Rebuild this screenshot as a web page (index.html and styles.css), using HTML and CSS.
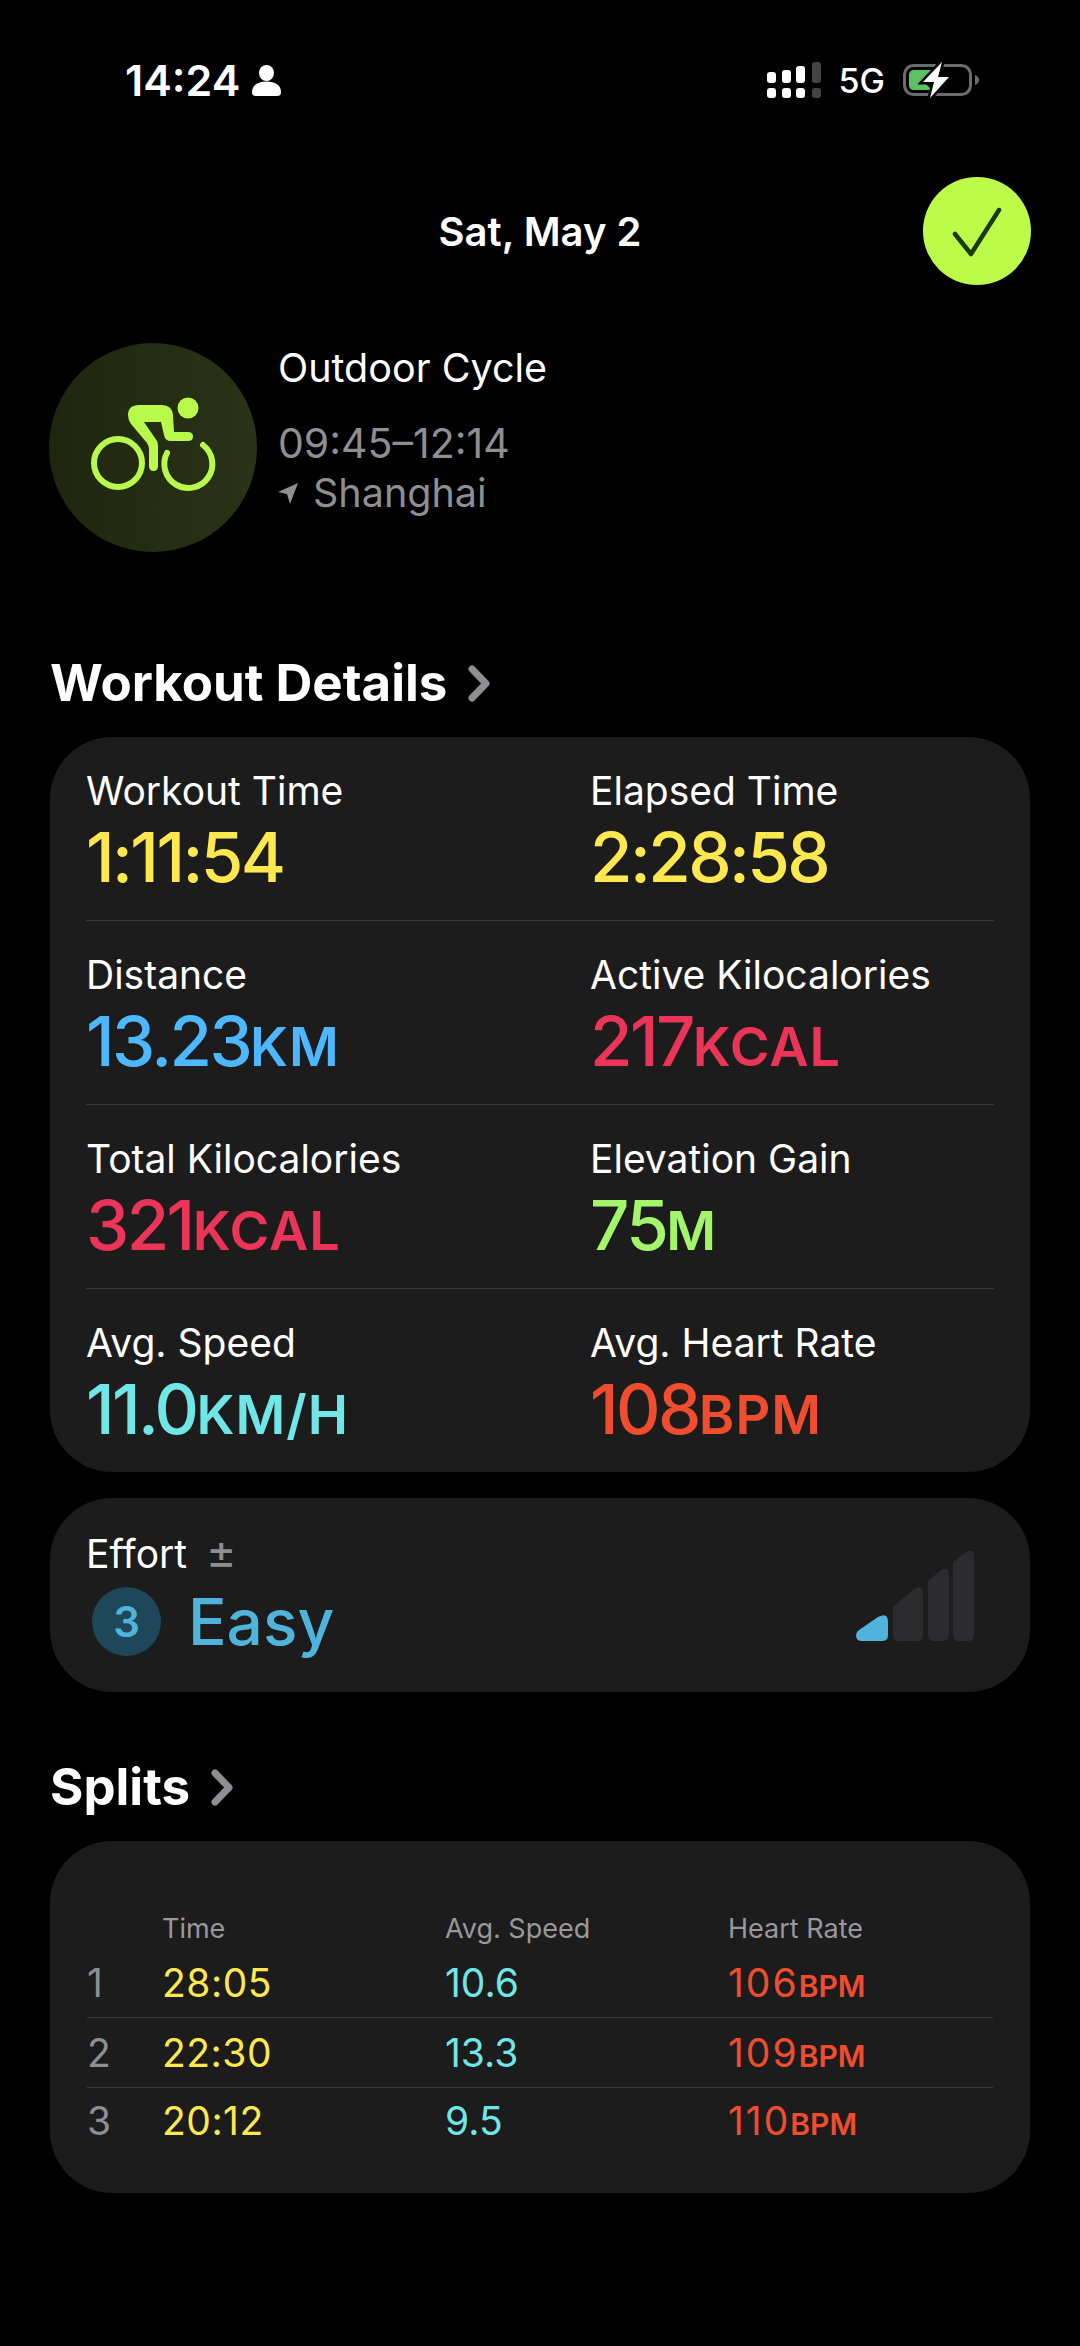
FILE: index.html
```html
<!DOCTYPE html>
<html>
<head>
  <meta charset="UTF-8">
  <title>Outdoor Cycle</title>
  <link rel="stylesheet" href="styles.css">
</head>
<body>
  <div class="status-bar">
    <div class="status-left">
      <span class="clock">14:24</span>
      <svg class="person" width="29" height="31" viewBox="0 0 29 31"><ellipse cx="14.500" cy="8" rx="7.500" ry="8"/><path d="M0 27C0 20 6 16.500 14.500 16.500S29 20 29 27C29 30 27.500 31 25 31H4C1.500 31 0 30 0 27Z"/></svg>
    </div>
    <div class="status-right">
      <svg class="signal" width="54" height="36" viewBox="0 0 54 36">
        <rect x="0" y="10" width="9" height="11" rx="3" fill="#fff"/>
        <rect x="15" y="8" width="9" height="13" rx="3" fill="#fff"/>
        <rect x="29" y="4" width="9" height="17" rx="3" fill="#fff"/>
        <rect x="45" y="0" width="9" height="21" rx="3" fill="#444"/>
        <rect x="0" y="26" width="9" height="10" rx="3" fill="#fff"/>
        <rect x="15" y="26" width="9" height="10" rx="3" fill="#fff"/>
        <rect x="29" y="26" width="9" height="10" rx="3" fill="#fff"/>
        <rect x="45" y="26" width="9" height="10" rx="3" fill="#444"/>
      </svg>
      <span class="network">5G</span>
      <svg class="battery" width="76" height="38" viewBox="0 0 76 38">
        <rect x="1.500" y="4.500" width="66" height="29" rx="9" fill="none" stroke="#6c6c6c" stroke-width="3"/>
        <path d="M72 14C75 15 76 17 76 19S75 23 72 24Z" fill="#6c6c6c"/>
        <path d="M11 9H32L22 22L29 29H11C8 29 6 27 6 24V14C6 11 8 9 11 9Z" fill="#5cc163"/>
        <path d="M39 1L20 21H31L27 37L46 16H35Z" fill="#000" stroke="#000" stroke-width="5"/>
        <path d="M39 1L20 21H31L27 37L46 16H35Z" fill="#fff"/>
      </svg>
    </div>
  </div>

  <div class="top-row">
    <span></span>
    <h1 class="date">Sat, May 2</h1>
    <div class="done">
      <svg width="108" height="108" viewBox="0 0 108 108"><path d="M32 57L48 77L76 33" fill="none" stroke="#1a3a10" stroke-width="4.500" stroke-linecap="round" stroke-linejoin="round"/></svg>
    </div>
  </div>

  <div class="activity">
    <div class="activity-icon">
      <svg width="208" height="209" viewBox="0 0 208 209">
        <circle cx="69" cy="120" r="24" fill="none" stroke="#b9f94c" stroke-width="6"/>
        <path d="M118 110A24 24 0 1 0 154 102" fill="none" stroke="#b9f94c" stroke-width="6" stroke-linecap="round"/>
        <circle cx="139" cy="65" r="10.500" fill="#b9f94c"/>
        <path d="M90 62H113Q123 62 124 72L125 89H139Q144 89 144 93.500Q144 98 139 98H122Q116 98 115 92L112 79H95L108 98Q109 100 109 103V123Q109 128 104.500 128Q100 128 100 123V106Q100 103 98 100L82 81Q79 77 79 72Q79 62 90 62Z" fill="#b9f94c"/>
      </svg>
    </div>
    <div class="activity-info">
      <div class="activity-name">Outdoor Cycle</div>
      <div class="activity-time">09:45–12:14</div>
      <div class="activity-place">
        <svg width="20" height="21" viewBox="0 0 20 21"><path d="M20 0L12 21L9 11L0 9Z" fill="#8e8e93"/></svg>
        <span>Shanghai</span>
      </div>
    </div>
  </div>

  <h2 class="section-title section-first">Workout Details
    <svg width="22" height="37" viewBox="0 0 22 37"><path d="M4 4L18 18.500L4 33" fill="none" stroke="#8e8e93" stroke-width="7" stroke-linecap="round" stroke-linejoin="round"/></svg>
  </h2>

  <div class="card details">
    <div class="metric-row">
      <div>
        <div class="label">Workout Time</div>
        <div class="value yellow">1:11:54</div>
      </div>
      <div>
        <div class="label">Elapsed Time</div>
        <div class="value yellow">2:28:58</div>
      </div>
    </div>
    <div class="metric-row">
      <div>
        <div class="label">Distance</div>
        <div class="value blue">13.23<span class="unit">KM</span></div>
      </div>
      <div>
        <div class="label">Active Kilocalories</div>
        <div class="value pink">217<span class="unit">KCAL</span></div>
      </div>
    </div>
    <div class="metric-row">
      <div>
        <div class="label">Total Kilocalories</div>
        <div class="value pink">321<span class="unit">KCAL</span></div>
      </div>
      <div>
        <div class="label">Elevation Gain</div>
        <div class="value green">75<span class="unit">M</span></div>
      </div>
    </div>
    <div class="metric-row">
      <div>
        <div class="label">Avg. Speed</div>
        <div class="value cyan">11.0<span class="unit">KM/H</span></div>
      </div>
      <div>
        <div class="label">Avg. Heart Rate</div>
        <div class="value orange">108<span class="unit">BPM</span></div>
      </div>
    </div>
  </div>

  <div class="card effort">
    <div>
      <div class="label">Effort <span class="plus-minus">±</span></div>
      <div class="effort-level">
        <span class="effort-badge">3</span>
        <span class="effort-name">Easy</span>
      </div>
    </div>
    <svg class="effort-bars" width="118" height="90" viewBox="0 0 118 90">
      <path d="M0 84Q0 81 3 79L22 66Q32 61 32 71V84Q32 90 26 90H6Q0 90 0 84Z" fill="#4fb3dc"/>
      <path d="M37 56L58 38Q67 33 67 42V84Q67 90 61 90H43Q37 90 37 84Z" fill="#2c2c2e"/>
      <path d="M72 30L85 19Q93 15 93 23V84Q93 90 87 90H78Q72 90 72 84Z" fill="#2c2c2e"/>
      <path d="M97 11L110 1Q118 -3 118 6V84Q118 90 112 90H103Q97 90 97 84Z" fill="#2c2c2e"/>
    </svg>
  </div>

  <h2 class="section-title section-splits">Splits
    <svg width="22" height="37" viewBox="0 0 22 37"><path d="M4 4L18 18.500L4 33" fill="none" stroke="#8e8e93" stroke-width="7" stroke-linecap="round" stroke-linejoin="round"/></svg>
  </h2>

  <div class="card splits">
    <div class="split-head">
      <span></span>
      <span>Time</span>
      <span>Avg. Speed</span>
      <span>Heart Rate</span>
    </div>
    <div class="split-row">
      <span class="split-num">1</span>
      <span class="yellow">28:05</span>
      <span class="cyan">10.6</span>
      <span class="orange">106<span class="split-unit">BPM</span></span>
    </div>
    <div class="split-row">
      <span class="split-num">2</span>
      <span class="yellow">22:30</span>
      <span class="cyan">13.3</span>
      <span class="orange">109<span class="split-unit">BPM</span></span>
    </div>
    <div class="split-row">
      <span class="split-num">3</span>
      <span class="yellow">20:12</span>
      <span class="cyan">9.5</span>
      <span class="orange">110<span class="split-unit">BPM</span></span>
    </div>
  </div>
</body>
</html>
```

FILE: styles.css
```css
:root {
  --card-color: #1c1c1c;
  --line-color: #383838;
  --gray-text: #8e8e93;
  --lime: #bdfb4a;
}

body {
  margin: 0;
  background-color: #000;
  color: #fff;
  font-family: Inter, "Noto Sans", sans-serif;
}

h1, h2 {
  margin: 0;
}

/* 状态栏 */
.status-bar {
  display: flex;
  align-items: center;
  justify-content: space-between;
  height: 80px;
  padding: 40px 101px 0 125px;
}
.status-left {
  display: flex;
  align-items: center;
  gap: 12px;
}
.clock {
  font-size: 43px;
  font-weight: 600;
}
.person {
  fill: #fff;
}
.status-right {
  display: flex;
  align-items: center;
  gap: 12px;
}
.network {
  font-size: 34px;
  font-weight: 500;
  margin-left: 6px;
  margin-right: 6px;
}

.top-row {
  display: grid;
  grid-template-columns: 1fr auto 1fr;
  align-items: center;
  height: 108px;
  margin-top: 57px;
  padding: 0 49px;
}
.date {
  font-size: 40px;
  font-weight: 600;
}
.done {
  justify-self: end;
  width: 108px;
  height: 108px;
  border-radius: 50%;
  background-color: var(--lime);
}

.activity {
  display: flex;
  gap: 21px;
  margin-top: 58px;
  padding-left: 49px;
}
.activity-icon {
  width: 208px;
  height: 209px;
  border-radius: 50%;
  background: linear-gradient(90deg, #1f2610, #2a3316);
}
.activity-info {
  font-size: 39.500px;
  line-height: 50px;
}
.activity-time {
  margin-top: 25px;
  color: var(--gray-text);
  font-size: 41px;
}
.activity-place {
  display: flex;
  align-items: center;
  gap: 15px;
  color: var(--gray-text);
}

.section-title {
  display: flex;
  align-items: center;
  gap: 21px;
  margin-left: 50px;
  font-size: 51px;
  font-weight: 700;
  line-height: 60px;
}
.section-first {
  margin-top: 101px;
}
.section-splits {
  margin-top: 65px;
}

.card {
  margin: 0 50px;
  background-color: var(--card-color);
  border-radius: 62px;
}
.details {
  margin-top: 24px;
  padding: 0 36px;
}
.metric-row {
  display: grid;
  grid-template-columns: 504px 1fr;
  padding: 31px 0 28px;
  border-bottom: 1px solid var(--line-color);
}
.metric-row:last-child {
  border-bottom: none;
}
.label {
  font-size: 39px;
  line-height: 46px;
}
.value {
  margin-top: 8px;
  font-size: 69px;
  font-weight: 500;
  line-height: 70px;
  letter-spacing: -2.600px;
}
.unit {
  font-size: 54px;
  font-weight: 600;
  line-height: 0;
  letter-spacing: 1px;
}

.yellow { color: #fde84f; }
.blue { color: #4db8ff; }
.pink { color: #ea3458; }
.green { color: #a5f56c; }
.cyan { color: #70e6e6; }
.orange { color: #f04d30; }

/* Effort */
.effort {
  display: flex;
  justify-content: space-between;
  height: 194px;
  box-sizing: border-box;
  margin-top: 26px;
  padding: 33px 56px 0 36px;
}
.plus-minus {
  margin-left: 8px;
  color: var(--gray-text);
  font-size: 46px;
  line-height: 0;
}
.effort-level {
  display: flex;
  align-items: center;
  gap: 27px;
  margin-top: 10px;
  margin-left: 6px;
}
.effort-badge {
  width: 69px;
  height: 69px;
  border-radius: 50%;
  background-color: #1e4759;
  color: #4fb3dc;
  font-size: 42px;
  font-weight: 600;
  line-height: 69px;
  text-align: center;
}
.effort-name {
  color: #4fb3dc;
  font-size: 64px;
  font-weight: 500;
  line-height: 69px;
}
.effort-bars {
  margin-top: 20px;
}

/* Splits */
.splits {
  height: 352px;
  box-sizing: border-box;
  margin-top: 24px;
  padding: 73px 37px 0;
}
.split-head,
.split-row {
  display: grid;
  grid-template-columns: 75px 283px 283px 1fr;
}
.split-head {
  margin-bottom: 4px;
  color: #98989d;
  font-size: 27px;
  line-height: 30px;
}
.split-row {
  padding: 12px 0 11px;
  border-bottom: 1px solid var(--line-color);
  font-size: 39px;
  line-height: 46px;
}
.split-row:last-child {
  padding-top: 10px;
  border-bottom: none;
}
.split-row .yellow {
  letter-spacing: 0.500px;
}
.split-row .orange {
  letter-spacing: 2px;
}
.split-num {
  color: var(--gray-text);
}
.split-unit {
  font-size: 30px;
  font-weight: 600;
  line-height: 0;
  letter-spacing: 0;
}
```
